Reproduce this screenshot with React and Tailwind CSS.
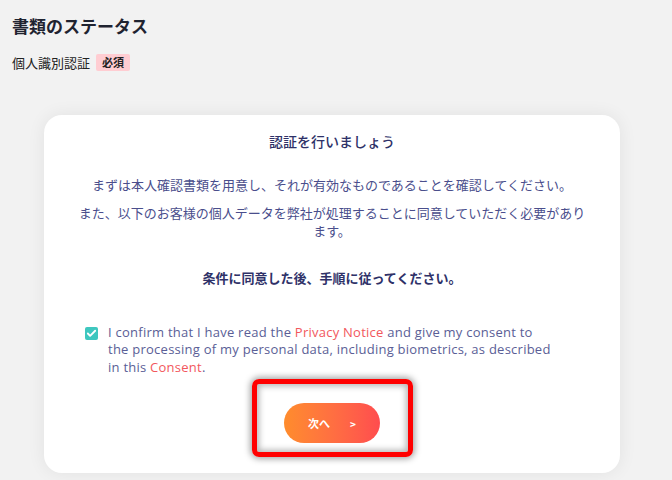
import { Check } from "lucide-react";

const jp = { fontFamily: '"Noto Sans CJK JP", "Noto Sans", sans-serif' };

function NextButton() {
  return (
    <div className="relative">
      {/* red annotation frame around the button */}
      <div className="absolute -left-[32px] -right-[33px] -top-[24px] -bottom-[14px] rounded-[7px] border-[5px] border-[#ff0000] shadow-[0_0_6px_2px_rgba(0,0,0,0.35),inset_0_0_6px_2px_rgba(0,0,0,0.3)]" />
      <button className="flex h-[40px] w-[96px] items-center justify-center gap-[20px] rounded-full bg-gradient-to-r from-[#ff8c2c] to-[#ff4c4e] text-[11px] font-bold text-white">
        <span style={jp}>次へ</span>
        <span className="text-[10px]">&gt;</span>
      </button>
    </div>
  );
}

export default function App() {
  return (
    <div className="min-h-screen bg-[#f2f2f2] px-[12px] pt-[14px]" style={jp}>
      <h1 className="text-[17px] font-bold leading-[24px] text-[#1f2330]">書類のステータス</h1>

      <div className="mt-[15px] flex items-center gap-[6px]">
        <span className="text-[13px] text-[#222]">個人識別認証</span>
        <span className="rounded-[2px] bg-[#ffcdd2] px-[6px] text-[11px] font-bold leading-[17px] text-[#222]">必須</span>
      </div>

      <div className="mx-auto mt-[42px] w-[576px] -translate-x-[4px] rounded-[18px] bg-white px-[32px] pt-[16px] pb-[30px] shadow-[0_0_18px_rgba(0,0,0,0.07)]">
        <div className="text-center text-[14px] font-medium leading-[20px] text-[#2e3168]">
          認証を行いましょう
        </div>

        <p className="mt-[25px] text-center text-[13px] leading-[18px] text-[#4a4e8c]">
          まずは本人確認書類を用意し、それが有効なものであることを確認してください。
        </p>
        <p className="mt-[10px] text-center text-[13px] leading-[18px] text-[#4a4e8c]">
          また、以下のお客様の個人データを弊社が処理することに同意していただく必要があります。
        </p>

        <p className="mt-[28px] text-center text-[13px] font-bold leading-[20px] text-[#2e3168]">
          条件に同意した後、手順に従ってください。
        </p>

        <div className="mt-[36px] flex items-start gap-[10px] pl-[9px]">
          <span className="mt-[3px] flex h-[13px] w-[13px] shrink-0 items-center justify-center rounded-[2px] bg-[#3ec7bf]">
            <Check size={11} strokeWidth={4} className="text-white" />
          </span>
          <p
            className="w-[460px] text-[13px] leading-[17.5px] tracking-[0.25px] text-[#5a5e96]"
            style={{ fontFamily: '"Open Sans", "Liberation Sans", sans-serif' }}
          >
            I confirm that I have read the <span className="text-[#f2575d]">Privacy Notice</span> and give my consent to
            <br />
            the processing of my personal data, including biometrics, as described
            <br />
            in this <span className="text-[#f2575d]">Consent</span>.
          </p>
        </div>

        <div className="mt-[27px] flex justify-center">
          <NextButton />
        </div>
      </div>
    </div>
  );
}
